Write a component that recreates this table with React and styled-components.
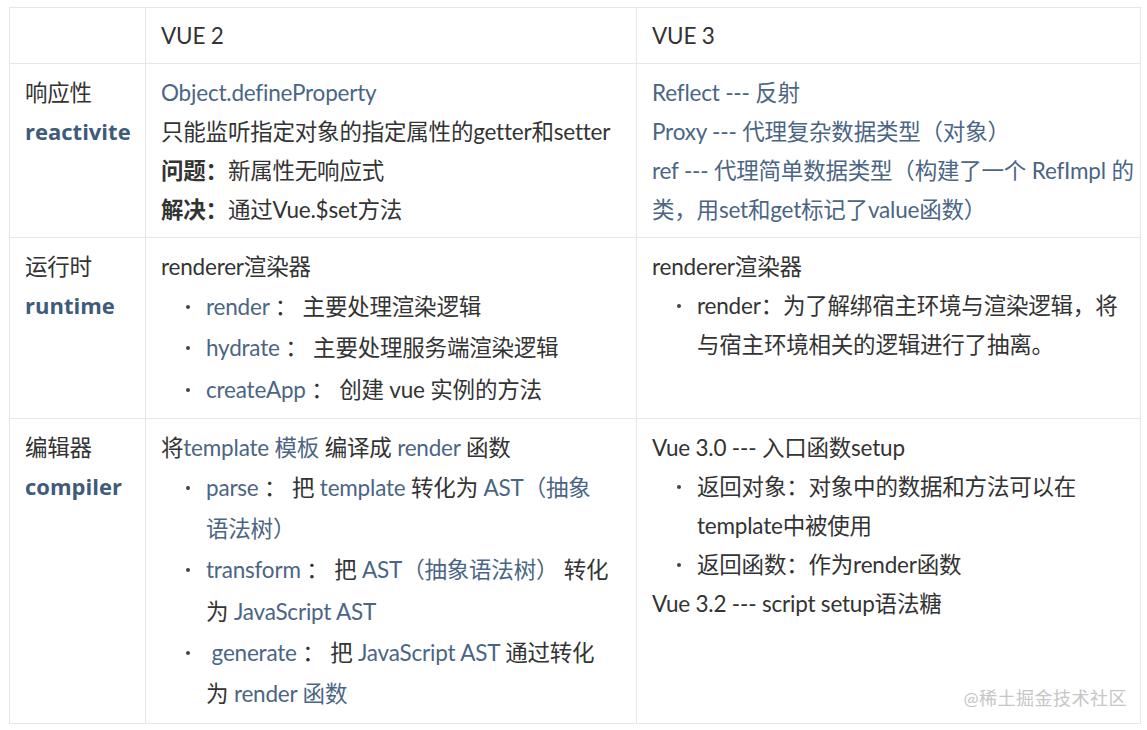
import React from "react";
import styled, { createGlobalStyle } from "styled-components";

const GlobalStyle = createGlobalStyle`
    body {
        margin: 0;
        background: #ffffff;
        font-family: Lato, "Noto Sans CJK SC", sans-serif;
    }
`;

function Item({ children, tight }) {
    return <ListItem tight={tight}>{children}</ListItem>;
}

function App() {
    return (
        <Page>
            <GlobalStyle />
            <Table>
                <colgroup>
                    <col style={{ width: 136 }} />
                    <col style={{ width: 491 }} />
                    <col style={{ width: 504 }} />
                </colgroup>
                <thead>
                    <tr>
                        <HeadCell></HeadCell>
                        <HeadCell>VUE 2</HeadCell>
                        <HeadCell>VUE 3</HeadCell>
                    </tr>
                </thead>
                <tbody>
                    <tr>
                        <Cell>
                            <Line>响应性</Line>
                            <Label>reactivite</Label>
                        </Cell>
                        <Cell padRight={24}>
                            <Line><Blue>Object.defineProperty</Blue></Line>
                            <Line>只能监听指定对象的指定属性的getter和setter</Line>
                            <Line><b>问题：</b>新属性无响应式</Line>
                            <Line><b>解决：</b>通过Vue.$set方法</Line>
                        </Cell>
                        <Cell padRight={3}>
                            <Line><Blue>Reflect --- 反射</Blue></Line>
                            <Line><Blue>Proxy --- 代理复杂数据类型（对象）</Blue></Line>
                            <Line><Blue>ref --- 代理简单数据类型（构建了一个 RefImpl 的类，用set和get标记了value函数）</Blue></Line>
                        </Cell>
                    </tr>
                    <tr>
                        <Cell>
                            <Line>运行时</Line>
                            <Label>runtime</Label>
                        </Cell>
                        <Cell padRight={24}>
                            <Line>renderer渲染器</Line>
                            <List>
                                <Item><Blue>render</Blue> ： 主要处理渲染逻辑</Item>
                                <Item><Blue>hydrate</Blue> ： 主要处理服务端渲染逻辑</Item>
                                <Item><Blue>createApp</Blue> ： 创建 vue 实例的方法</Item>
                            </List>
                        </Cell>
                        <Cell padRight={3}>
                            <Line>renderer渲染器</Line>
                            <List>
                                <Item tight>render：为了解绑宿主环境与渲染逻辑，将与宿主环境相关的逻辑进行了抽离。</Item>
                            </List>
                        </Cell>
                    </tr>
                    <tr>
                        <Cell>
                            <Line>编辑器</Line>
                            <Label>compiler</Label>
                        </Cell>
                        <Cell padRight={24}>
                            <Line>将<Blue>template 模板</Blue> 编译成 <Blue>render</Blue> 函数</Line>
                            <List>
                                <Item><Blue>parse</Blue> ： 把 <Blue>template</Blue> 转化为 <Blue>AST（抽象语法树）</Blue></Item>
                                <Item><Blue>transform</Blue> ： 把 <Blue>AST（抽象语法树）</Blue> 转化为 <Blue>JavaScript AST</Blue></Item>
                                <Item>&nbsp;<Blue>generate</Blue> ： 把 <Blue>JavaScript AST</Blue> 通过转化为 <Blue>render 函数</Blue></Item>
                            </List>
                        </Cell>
                        <Cell padRight={3}>
                            <Line>Vue 3.0 --- 入口函数setup</Line>
                            <List>
                                <Item tight>返回对象：对象中的数据和方法可以在template中被使用</Item>
                                <Item tight>返回函数：作为render函数</Item>
                            </List>
                            <Line>Vue 3.2 --- script setup语法糖</Line>
                        </Cell>
                    </tr>
                </tbody>
            </Table>
            <Watermark>@稀土掘金技术社区</Watermark>
        </Page>
    );
}

export default App;

const Page = styled.div`
    position: relative;
    width: 1147px;
    height: 730px;
    padding: 7px 0 0 9px;
    box-sizing: border-box;
    overflow: hidden;
`;

const Table = styled.table`
    width: 1131px;
    table-layout: fixed;
    border-collapse: collapse;
    font-size: 22.5px;
    letter-spacing: -0.2px;
    color: #333333;
`;

const HeadCell = styled.th`
    height: 55px;
    padding: 0 15px;
    border: 1px solid #e6e6e6;
    text-align: left;
    font-weight: 400;
    line-height: 39px;
`;

const Cell = styled.td`
    padding: 9px ${(p) => (p.padRight ?? 15)}px 8px 15px;
    border: 1px solid #e6e6e6;
    vertical-align: top;
    line-height: 39px;
`;

const Line = styled.div`
    b {
        font-weight: 700;
    }
`;

const Label = styled.div`
    font-family: "Open Sans", "Noto Sans CJK SC", sans-serif;
    font-size: 22px;
    letter-spacing: 0;
    font-weight: 700;
    color: #3e5b7b;
`;

const Blue = styled.span`
    color: #4b6584;
`;

const List = styled.ul`
    list-style: none;
    margin: 0;
    padding: 0 0 0 45px;
`;

const ListItem = styled.li`
    position: relative;
    line-height: ${(p) => (p.tight ? "39px" : "41.3px")};

    &::before {
        content: "";
        position: absolute;
        left: -20px;
        top: ${(p) => (p.tight ? "18px" : "19px")};
        width: 4px;
        height: 4px;
        border-radius: 50%;
        background: #444444;
    }
`;

const Watermark = styled.div`
    position: absolute;
    right: 20px;
    top: 684px;
    font-size: 18px;
    color: #c6c6c6;
    letter-spacing: 0.5px;
`;
